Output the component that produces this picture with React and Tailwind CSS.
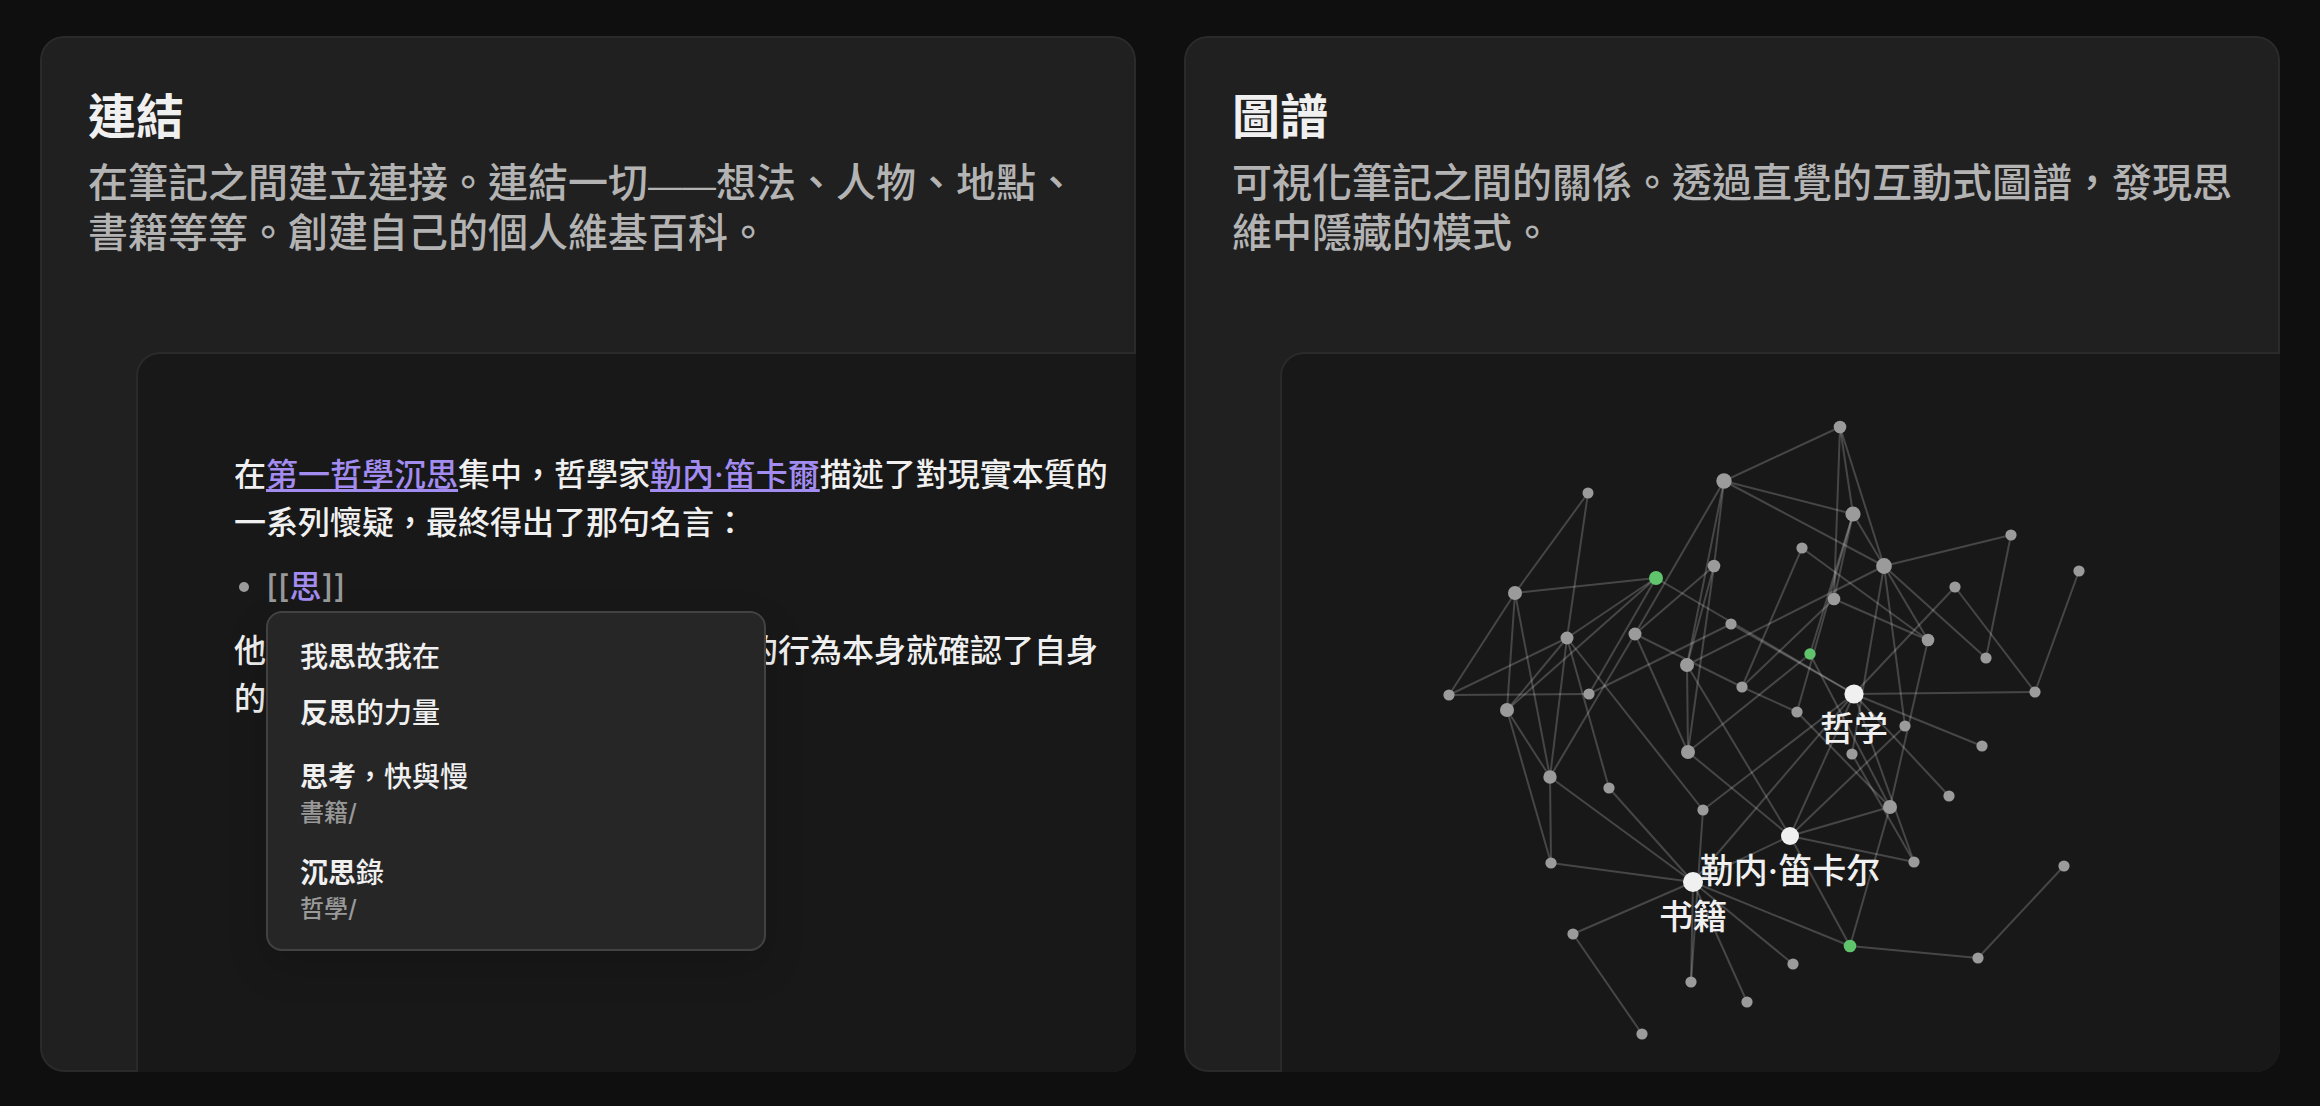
const nodes = {
  a: [306, 139, 5.5],
  b: [442, 127, 7.7],
  c: [432, 212, 6.3],
  d: [374, 224, 7, 'green'],
  e: [233, 239, 7],
  f: [285, 284, 6.5],
  g: [353, 280, 6.5],
  h: [449, 270, 5.6],
  i: [405, 311, 7],
  j: [460, 333, 5.6],
  k: [167, 341, 5.6],
  l: [307, 340, 5.6],
  m: [558, 73, 6.3],
  n: [571, 160, 7.6],
  o: [520, 194, 5.6],
  p: [602, 212, 7.9],
  q: [552, 245, 6.3],
  r: [729, 181, 5.6],
  s: [673, 233, 5.6],
  t: [797, 217, 5.6],
  u: [646, 286, 6.3],
  v: [704, 304, 5.6],
  w: [528, 300, 5.7, 'green'],
  philosophy: [572, 340, 9.6, 'white', '哲学'],
  y: [753, 338, 5.6],
  z: [225, 356, 7],
  aa: [268, 423, 6.7],
  ab: [327, 434, 5.6],
  ac: [406, 398, 7],
  ad: [421, 456, 5.6],
  ae: [269, 509, 5.6],
  books: [411, 528, 10, 'white', '书籍'],
  ag: [291, 580, 5.6],
  ah: [360, 680, 5.6],
  ai: [409, 628, 5.6],
  aj: [465, 648, 5.6],
  ak: [515, 358, 5.6],
  al: [623, 372, 5.6],
  am: [700, 392, 5.6],
  an: [570, 400, 5.6],
  ao: [667, 442, 5.6],
  ap: [608, 453, 7],
  descartes: [508, 482, 9, 'white', '勒内·笛卡尔'],
  ar: [632, 508, 5.6],
  as: [568, 592, 6.3, 'green'],
  at: [511, 610, 5.6],
  au: [696, 604, 5.6],
  av: [782, 512, 5.6],
};

const links = {
  a: ['e', 'f'],
  b: ['m', 'n', 'p', 'c', 'g', 'i'],
  c: ['g', 'i', 'ac'],
  d: ['e', 'f', 'z', 'l', 'philosophy'],
  e: ['k', 'z', 'aa'],
  f: ['k', 'z', 'aa', 'ab', 'ad'],
  g: ['aa', 'ac', 'j'],
  h: ['l', 'philosophy'],
  i: ['p', 'ac', 'descartes'],
  j: ['o', 'q', 'ak'],
  k: ['l'],
  m: ['n', 'p', 'q'],
  n: ['p', 'q', 'w', 'ak'],
  o: ['u'],
  p: ['r', 'u', 'v', 'al', 'an'],
  q: ['u'],
  r: ['v'],
  s: ['y', 'philosophy'],
  t: ['y'],
  u: ['ap'],
  w: ['ac', 'ap'],
  philosophy: ['y', 'am', 'ao', 'ar', 'ad', 'books', 'descartes'],
  z: ['aa', 'ae'],
  aa: ['ae', 'books'],
  ac: ['descartes'],
  ad: ['ai'],
  books: ['ab', 'ae', 'ag', 'ai', 'aj', 'at', 'as', 'descartes'],
  ag: ['ah'],
  ak: ['ap'],
  al: ['descartes'],
  an: ['ar'],
  ap: ['descartes', 'as'],
  descartes: ['ar', 'as'],
  as: ['au'],
  au: ['av'],
};

const fills = {
  gray: 'fill-[#9b9b9b]',
  green: 'fill-[#5fc46b]',
  white: 'fill-[#f0f0f0]',
};

const suggestions = [
  { parts: [['我'], ['思', true], ['故我在']] },
  { parts: [['反思', true], ['的力量']] },
  { parts: [['思考', true], ['，快與慢']], folder: '書籍/' },
  { parts: [['沉思', true], ['錄']], folder: '哲學/' },
];

function FeatureCard({ title, text, children }) {
  return (
    <section className="relative flex min-w-0 flex-col overflow-hidden rounded-3xl bg-[#202020]">
      <div className="pointer-events-none absolute inset-0 rounded-3xl border-2 border-[#2a2a2a]" />
      <header className="px-12 pt-12 pb-[94px]">
        <h2 className="mb-2 text-[48px] leading-[66px] font-bold text-[#f0f0f0]">{title}</h2>
        <p className="text-[40px] leading-[50px] font-medium text-[#b3b3b3]">{text}</p>
      </header>
      <div className="relative ml-24 flex-1 rounded-tl-3xl border-t-2 border-l-2 border-[#2a2a2a] bg-[#181818]">
        {children}
      </div>
    </section>
  );
}

function NoteLink({ children }) {
  return (
    <a href="#note" className="text-[#a38cf0] underline decoration-[3px] underline-offset-[3px] [text-decoration-skip-ink:none]">
      {children}
    </a>
  );
}

function Suggestion({ parts, folder }) {
  return (
    <button type="button" className={`block w-full px-8 text-left text-[28px] leading-9 ${folder ? 'py-3' : 'py-2.5'}`}>
      {parts.map(([part, match]) => (
        <span key={part} className={match ? 'font-bold' : ''}>{part}</span>
      ))}
      {folder && <span className="block text-[24px] leading-9 text-[#999999]">{folder}</span>}
    </button>
  );
}

function Suggestions() {
  const notes = suggestions.filter((s) => !s.folder);
  const filed = suggestions.filter((s) => s.folder);
  return (
    <div className="absolute top-full left-0 z-10 flex w-[500px] flex-col gap-1.5 rounded-2xl border-2 border-[#424242] bg-[#262626] pt-4 pb-2.5 shadow-[0_16px_40px_rgba(0,0,0,0.15)]">
      {[notes, filed].map((group, index) => (
        <ul key={index}>
          {group.map((item) => (
            <li key={item.parts[0][0]}>
              <Suggestion {...item} />
            </li>
          ))}
        </ul>
      ))}
    </div>
  );
}

function Editor() {
  return (
    <div className="flex flex-col gap-4 pt-[97px] pr-6 pb-20 pl-24 text-[32px] leading-[48px] font-medium text-[#f0f0f0]">
      <p>
        在<NoteLink>第一哲學沉思</NoteLink>集中，哲學家<NoteLink>勒內·笛卡爾</NoteLink>描述了對現實本質的一系列懷疑，最終得出了那句名言：
      </p>
      <ul>
        <li className="flex items-center">
          <span className="flex w-8 pl-[5px]">
            <span className="size-2.5 rounded-full bg-[#9b9b9b]" />
          </span>
          <div className="relative">
            <span className="text-[#999999]">[[</span>
            <span className="text-[#a38cf0]">思</span>
            <span className="text-[#999999]">]]</span>
            <Suggestions />
          </div>
        </li>
      </ul>
      <p>他的結論是，即使懷疑一切，這思考的行為本身就確認了自身的存在。</p>
    </div>
  );
}

function Graph() {
  return (
    <svg viewBox="0 0 998 718" className="block h-auto w-full" role="img" aria-label="圖譜">
      <g className="stroke-white/20" strokeWidth="2">
        {Object.entries(links).flatMap(([from, targets]) =>
          targets.map((to) => (
            <line key={`${from}-${to}`} x1={nodes[from][0]} y1={nodes[from][1]} x2={nodes[to][0]} y2={nodes[to][1]} />
          ))
        )}
      </g>
      {Object.entries(nodes).map(([id, [x, y, r, tone = 'gray']]) => (
        <circle key={id} cx={x} cy={y} r={r} className={fills[tone]} />
      ))}
      <g textAnchor="middle" className="fill-[#f0f0f0] font-['Inter','Noto_Sans_CJK_SC',sans-serif] text-[34px] font-medium">
        {Object.entries(nodes).filter(([, node]) => node[4]).map(([id, [x, y, , , label]]) => (
          <text key={id} x={x} y={y + 47}>{label}</text>
        ))}
      </g>
    </svg>
  );
}

export default function App() {
  return (
    <main lang="zh-Hant" className="grid min-h-screen grid-cols-2 content-start gap-12 bg-[#0f0f0f] px-10 py-9 font-['Inter','Noto_Sans_CJK_TC',sans-serif]">
      <FeatureCard
        title="連結"
        text={<>在筆記之間建立連接。連結一切<span className="font-['Liberation_Sans'] text-[34px] leading-none">——</span>想法、人物、地點、書籍等等。創建自己的個人維基百科。</>}
      >
        <Editor />
      </FeatureCard>
      <FeatureCard title="圖譜" text="可視化筆記之間的關係。透過直覺的互動式圖譜，發現思維中隱藏的模式。">
        <Graph />
      </FeatureCard>
    </main>
  );
}
